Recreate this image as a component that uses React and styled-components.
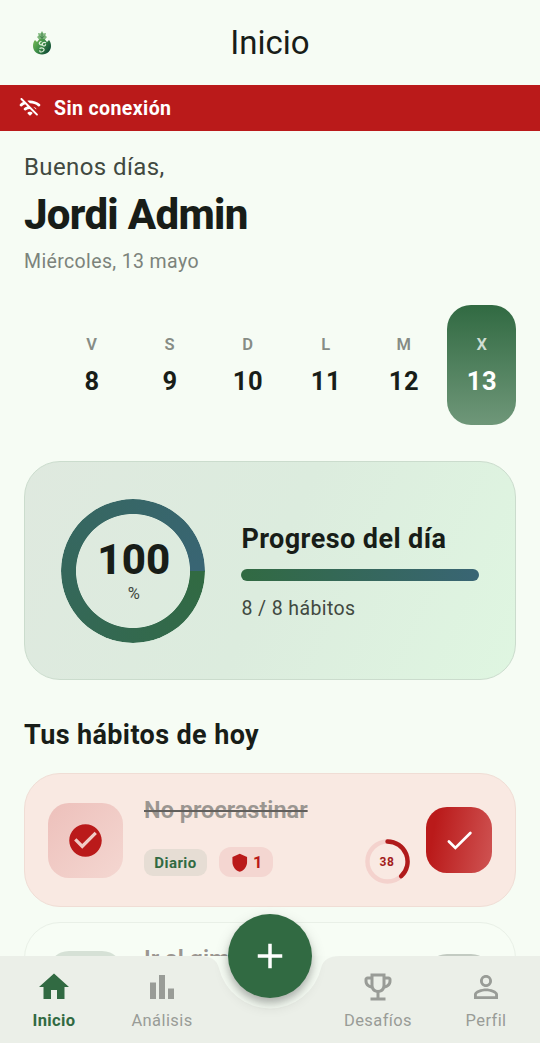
import styled, { createGlobalStyle } from 'styled-components'
import {
    MdHome,
    MdBarChart,
    MdOutlineEmojiEvents,
    MdPersonOutline,
    MdAdd,
    MdCheckCircle,
    MdShield,
} from 'react-icons/md'

const GlobalStyle = createGlobalStyle`
    * {
        box-sizing: border-box;
    }

    body {
        margin: 0;
        background: #F6FCF4;
        font-family: Roboto, "Noto Sans", sans-serif;
        color: #181D18;
    }
`

const Screen = styled.div`
    position: relative;
    width: 540px;
    height: 1043px;
    overflow: hidden;
    background: #F6FCF4;
`

const TopBar = styled.header`
    height: 85px;
    padding: 0 32px;
    display: grid;
    grid-template-columns: 60px 1fr 60px;
    align-items: center;
`

const Title = styled.h1`
    margin: 0;
    text-align: center;
    font-weight: 400;
    font-size: 33px;
    line-height: 42px;
`

const OfflineBanner = styled.div`
    height: 46.4px;
    padding-left: 18px;
    display: flex;
    align-items: center;
    gap: 12px;
    background: #BA1A1A;
    color: #FFFFFF;
    font-weight: 700;
    font-size: 19.5px;
    letter-spacing: 0.4px;
`

const Content = styled.main`
    height: 824.6px;
    overflow: hidden;
    padding: 19px 24px 0;
`

const Greeting = styled.div`
    height: 34px;
    line-height: 34px;
    font-size: 24px;
    letter-spacing: 0.4px;
    color: #414941;
`

const UserName = styled.div`
    height: 54px;
    margin-top: 4px;
    line-height: 54px;
    font-size: 42px;
    font-weight: 800;
    letter-spacing: -0.68px;
`

const Today = styled.div`
    height: 30px;
    margin-top: 4px;
    line-height: 32px;
    font-size: 19.5px;
    letter-spacing: 0.37px;
    color: #7C837B;
`

const Week = styled.div`
    display: flex;
    justify-content: flex-end;
    gap: 9px;
    margin-top: 29px;
`

const Day = styled.div`
    width: 69px;
    height: 120px;
    display: flex;
    flex-direction: column;
    align-items: center;
    padding: 28px 0 0 1px;
    border-radius: 24px;
    background: ${({ $active }) => ($active ? 'linear-gradient(#316A42, #6F9779)' : 'none')};
    color: ${({ $active }) => ($active ? '#FFFFFF' : '#181D18')};
`

const DayLetter = styled.span`
    line-height: 24px;
    font-size: 16.5px;
    font-weight: 600;
    letter-spacing: 0.75px;
    color: ${({ $active }) => ($active ? '#D0DED3' : '#868C85')};
`

const DayNumber = styled.span`
    margin-top: 8px;
    line-height: 33px;
    font-size: 25.5px;
    font-weight: 700;
    letter-spacing: 0.6px;
`

const ProgressCard = styled.section`
    height: 219px;
    margin-top: 36px;
    padding: 0 36.4px;
    display: flex;
    align-items: center;
    gap: 36px;
    border: 1.5px solid #CBDCCD;
    border-radius: 36px;
    background: linear-gradient(114deg, #DFE9DF, #DCECDE 50%, #DFF6E1);
`

const Ring = styled.div`
    position: relative;
    width: 144px;
    height: 144px;
    flex: none;
    display: flex;
    flex-direction: column;
    align-items: center;
    padding: 37px 0 0 1px;

    &::before {
        content: '';
        position: absolute;
        inset: 0;
        border-radius: 50%;
        background: conic-gradient(from 90deg, #316A42, #396574);
        mask: radial-gradient(circle, transparent 56.6px, #000 57.4px);
    }
`

const Percent = styled.span`
    line-height: 48px;
    font-size: 42px;
    font-weight: 800;
    letter-spacing: 0.2px;
`

const PercentSign = styled.span`
    line-height: 20px;
    font-size: 16.5px;
    color: #414941;
`

const ProgressInfo = styled.div`
    flex: 1;
`

const ProgressTitle = styled.h2`
    margin: 2px 0 0;
    line-height: 36px;
    font-size: 27px;
    font-weight: 700;
    letter-spacing: 0.42px;
    white-space: nowrap;
`

const Bar = styled.div`
    height: 12px;
    margin-top: 12px;
    border-radius: 6px;
    background: linear-gradient(90deg, #316A42, #396574);
`

const ProgressCount = styled.div`
    margin-top: 13px;
    line-height: 29px;
    font-size: 19.5px;
    letter-spacing: 0.4px;
    color: #414941;
`

const SectionTitle = styled.h2`
    margin: 37px 0 18.5px;
    line-height: 37.5px;
    font-size: 27px;
    font-weight: 700;
    letter-spacing: 0.38px;
`

const Habit = styled.article`
    height: 134px;
    margin-bottom: 14.5px;
    padding: 0 23px;
    display: flex;
    align-items: center;
    border: 1.5px solid ${({ $done }) => ($done ? '#F0DDD5' : '#E9F0E7')};
    border-radius: 36px;
    background: ${({ $done }) => ($done ? '#F9E9E2' : '#F7FDF5')};
`

const HabitIcon = styled.div`
    width: 75px;
    height: 75px;
    flex: none;
    display: flex;
    align-items: center;
    justify-content: center;
    border-radius: 21px;
    color: #BA1A1A;
    background: ${({ $done }) => ($done ? 'linear-gradient(135deg, #EDC0BB, #F4D7D1)' : '#D6E1D6')};
`

const HabitBody = styled.div`
    flex: 1;
    height: 90px;
    margin-left: 21px;
`

const HabitName = styled.div`
    width: max-content;
    height: 30px;
    line-height: 31px;
    font-size: 23.5px;
    font-weight: 600;
    color: #9B9691;
    text-decoration: line-through;
    text-decoration-color: #625F5C;
    text-decoration-thickness: 2px;
`

const HabitMeta = styled.div`
    display: flex;
    align-items: center;
    gap: 12px;
    height: 30px;
    margin-top: 22px;
`

const Frequency = styled.span`
    width: 63px;
    height: 27px;
    line-height: 28px;
    text-align: center;
    border-radius: 9px;
    background: #E6DDD4;
    color: #316A42;
    font-size: 15px;
    font-weight: 700;
    letter-spacing: 0.45px;
`

const Lives = styled.span`
    width: 54px;
    height: 30px;
    display: flex;
    align-items: center;
    justify-content: center;
    gap: 4px;
    border-radius: 12px;
    background: #F4D6D1;
    color: #BA1A1A;
    font-size: 16.5px;
    font-weight: 700;
`

const Streak = styled.div`
    position: relative;
    width: 45px;
    height: 45px;
    margin: 43px 16.5px 0 0;
    display: flex;
    align-items: center;
    justify-content: center;
    color: #A31C1B;
    font-size: 12px;
    font-weight: 700;
    letter-spacing: 0.6px;

    svg {
        position: absolute;
        inset: 0;
    }
`

const DoneButton = styled.button`
    width: 66px;
    height: ${({ $done }) => ($done ? 66 : 69)}px;
    flex: none;
    padding: 0;
    display: flex;
    align-items: center;
    justify-content: center;
    border: 0;
    border-radius: 21px;
    background: ${({ $done }) => ($done ? 'linear-gradient(100deg, #BA1A1A 15%, #CF5453)' : '#C3CBC2')};
`

const BottomNav = styled.nav`
    position: absolute;
    left: 0;
    bottom: 0;
    width: 540px;
    height: 87px;
    display: grid;
    grid-template-columns: repeat(5, 108px);
    background: #EBEFE8;
    clip-path: path('M0 0 H200 C211 0 217 4 218.9 12 A52.5 52.5 0 0 0 321.1 12 C323 4 329 0 340 0 H540 V87 H0 Z');
`

const NavItem = styled.a`
    grid-column: ${({ $column }) => $column};
    display: flex;
    flex-direction: column;
    align-items: center;
    padding-top: 13px;
    color: ${({ $active }) => ($active ? '#316A42' : '#999C97')};
    font-size: 16.5px;
    font-weight: ${({ $active }) => ($active ? 700 : 400)};
    letter-spacing: 0.4px;
    line-height: 24px;

    svg {
        margin-bottom: 4px;
    }
`

const AddButton = styled.button`
    position: absolute;
    left: 228px;
    top: 914px;
    width: 84px;
    height: 84px;
    padding: 0;
    display: flex;
    align-items: center;
    justify-content: center;
    border: 0;
    border-radius: 50%;
    background: #316A42;
    color: #FFFFFF;
    box-shadow: 0 5px 7px rgba(0, 0, 0, 0.18), 0 6px 15px rgba(0, 0, 0, 0.16);
`

const days = [
    { letter: 'V', number: 8 },
    { letter: 'S', number: 9 },
    { letter: 'D', number: 10 },
    { letter: 'L', number: 11 },
    { letter: 'M', number: 12 },
    { letter: 'X', number: 13, active: true },
]

const Logo = () => (
    <svg width="20" height="26" viewBox="0 0 20 26">
        <defs>
            <linearGradient id="leaf" x1="0" y1="0" x2="1" y2="0.6">
                <stop offset="0" stopColor="#79BC55" />
                <stop offset="0.5" stopColor="#3F9048" />
                <stop offset="1" stopColor="#124E35" />
            </linearGradient>
        </defs>
        <path d="M10 1l1.5 2.5L14 3l-.6 2.6L15 7l-2 2.5H7L5 7l1.6-1.4L6 3l2.5.5z" fill="#7FB77C" />
        <path d="M10 3v7M7.5 6L10 8l2.5-2" fill="none" stroke="#3D7E48" strokeWidth="0.9" />
        <path d="M10 24.500C4.500 24.500 1 20.500 1 16c0-2.500.6-4.500 2-6L5 12l2.500-3h5L15 12l2-2c1.400 1.500 2 3.500 2 6 0 4.500-3.500 8.500-9 8.500z" fill="url(#leaf)" />
        <path d="M9.500 11.500c-2 0-3 2-1.500 3s3-.5 2-1.500M14 13c-2-1.500-4.500.2-3.500 2s3.500.8 3-.7M7.500 18.500c2.500-1.500 5.500 0 4.300 2S7 22.500 8 20.300" fill="none" stroke="#E3F1DD" strokeWidth="1.200" />
    </svg>
)

const WifiOffIcon = () => (
    <svg width="24" height="24" viewBox="0 0 24 24" fill="currentColor">
        <path d="M20.06 10.14c.56.46 1.38.42 1.89-.09.59-.59.55-1.57-.1-2.1-3.59-2.94-8.2-4.03-12.55-3.26l2.59 2.59c2.89-.03 5.8.92 8.17 2.86zm-2.27 1.83c-.78-.57-1.63-1-2.52-1.3l2.95 2.95c.24-.58.1-1.27-.43-1.65zm-3.84 4.26c-1.22-.63-2.68-.63-3.91 0-.6.31-.7 1.12-.23 1.59l1.47 1.47c.39.39 1.02.39 1.41 0l1.47-1.47c.49-.47.39-1.28-.21-1.59zm5.73 1.67L4.12 2.34c-.39-.39-1.02-.39-1.41 0-.39.39-.39 1.02 0 1.41L5.05 6.1c-1.01.5-1.99 1.11-2.89 1.85-.65.53-.69 1.51-.1 2.1.51.51 1.33.55 1.89.09 1-.82 2.1-1.46 3.25-1.93l2.23 2.23c-1.13.3-2.21.8-3.19 1.51-.69.5-.73 1.51-.13 2.11l.01.01c.49.49 1.26.54 1.83.13 1.19-.84 2.58-1.26 3.97-1.29l6.37 6.37c.39.39 1.02.39 1.41 0 .37-.38.37-1-.02-1.38z" />
    </svg>
)

const App = () => {
    return (
        <>
            <GlobalStyle />
            <Screen>
                <TopBar>
                    <Logo />
                    <Title>Inicio</Title>
                </TopBar>
                <OfflineBanner>
                    <WifiOffIcon />
                    Sin conexión
                </OfflineBanner>
                <Content>
                    <Greeting>Buenos días,</Greeting>
                    <UserName>Jordi Admin</UserName>
                    <Today>Miércoles, 13 mayo</Today>
                    <Week>
                        {days.map((day) => (
                            <Day key={day.number} $active={day.active}>
                                <DayLetter $active={day.active}>{day.letter}</DayLetter>
                                <DayNumber>{day.number}</DayNumber>
                            </Day>
                        ))}
                    </Week>
                    <ProgressCard>
                        <Ring>
                            <Percent>100</Percent>
                            <PercentSign>%</PercentSign>
                        </Ring>
                        <ProgressInfo>
                            <ProgressTitle>Progreso del día</ProgressTitle>
                            <Bar />
                            <ProgressCount>8 / 8 hábitos</ProgressCount>
                        </ProgressInfo>
                    </ProgressCard>
                    <SectionTitle>Tus hábitos de hoy</SectionTitle>
                    <Habit $done>
                        <HabitIcon $done>
                            <MdCheckCircle size={39} />
                        </HabitIcon>
                        <HabitBody>
                            <HabitName>No procrastinar</HabitName>
                            <HabitMeta>
                                <Frequency>Diario</Frequency>
                                <Lives>
                                    <MdShield size={19.5} />1
                                </Lives>
                            </HabitMeta>
                        </HabitBody>
                        <Streak>
                            <svg width="45" height="45" viewBox="0 0 46 46" fill="none" strokeWidth="4.5">
                                <circle cx="23" cy="23" r="20.5" stroke="#F4D2CD" />
                                <path d="M23 2.5A20.5 20.5 0 0 1 37 38" stroke="#B01B1B" strokeLinecap="round" />
                            </svg>
                            38
                        </Streak>
                        <DoneButton $done>
                            <svg width="33" height="33" viewBox="0 0 24 24" fill="none">
                                <path d="M4.3 12.7L9 17.4 19.9 6.6" stroke="#FFFFFF" strokeWidth="2" strokeLinecap="round" />
                            </svg>
                        </DoneButton>
                    </Habit>
                    <Habit>
                        <HabitIcon />
                        <HabitBody>
                            <HabitName>Ir al gimnasio</HabitName>
                        </HabitBody>
                        <DoneButton />
                    </Habit>
                </Content>
                <BottomNav>
                    <NavItem $column={1} $active>
                        <MdHome size={36} />
                        Inicio
                    </NavItem>
                    <NavItem $column={2}>
                        <MdBarChart size={36} />
                        Análisis
                    </NavItem>
                    <NavItem $column={4}>
                        <MdOutlineEmojiEvents size={36} />
                        Desafíos
                    </NavItem>
                    <NavItem $column={5}>
                        <MdPersonOutline size={36} />
                        Perfil
                    </NavItem>
                </BottomNav>
                <AddButton>
                    <MdAdd size={42} />
                </AddButton>
            </Screen>
        </>
    )
}

export default App
